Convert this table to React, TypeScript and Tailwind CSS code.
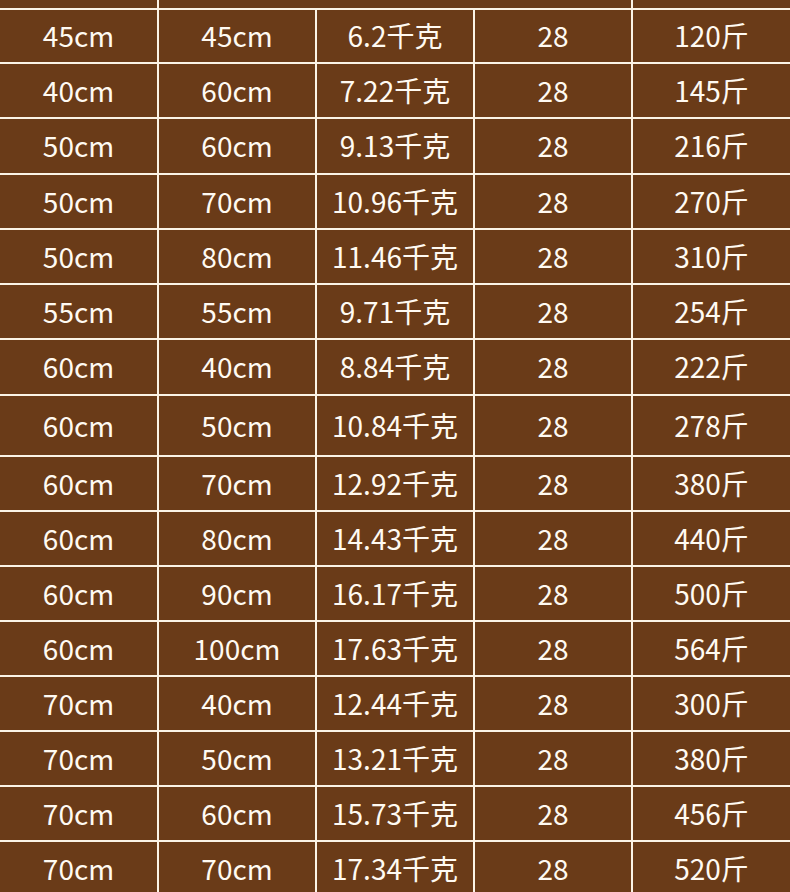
import React from "react";

const rows: { h: string; c: string[] }[] = [
  { h: "h-[52px]", c: ["45cm", "45cm", "6.2千克", "28", "120斤"] },
  { h: "h-[53px]", c: ["40cm", "60cm", "7.22千克", "28", "145斤"] },
  { h: "h-[54px]", c: ["50cm", "60cm", "9.13千克", "28", "216斤"] },
  { h: "h-[53px]", c: ["50cm", "70cm", "10.96千克", "28", "270斤"] },
  { h: "h-[53px]", c: ["50cm", "80cm", "11.46千克", "28", "310斤"] },
  { h: "h-[53px]", c: ["55cm", "55cm", "9.71千克", "28", "254斤"] },
  { h: "h-[54px]", c: ["60cm", "40cm", "8.84千克", "28", "222斤"] },
  { h: "h-[59px]", c: ["60cm", "50cm", "10.84千克", "28", "278斤"] },
  { h: "h-[53px]", c: ["60cm", "70cm", "12.92千克", "28", "380斤"] },
  { h: "h-[53px]", c: ["60cm", "80cm", "14.43千克", "28", "440斤"] },
  { h: "h-[53px]", c: ["60cm", "90cm", "16.17千克", "28", "500斤"] },
  { h: "h-[53px]", c: ["60cm", "100cm", "17.63千克", "28", "564斤"] },
  { h: "h-[53px]", c: ["70cm", "40cm", "12.44千克", "28", "300斤"] },
  { h: "h-[53px]", c: ["70cm", "50cm", "13.21千克", "28", "380斤"] },
  { h: "h-[53px]", c: ["70cm", "60cm", "15.73千克", "28", "456斤"] },
  { h: "h-[53px]", c: ["70cm", "70cm", "17.34千克", "28", "520斤"] },
];

export default function App() {
  return (
    <div
      className="w-[790px] h-[892px] overflow-hidden bg-[#fbf3e6] flex flex-col gap-[2px] text-[#fffaf2] text-[28px] leading-none"
      style={{ fontFamily: '"Noto Sans CJK SC", "Noto Sans", sans-serif' }}
    >
      <div className="grid grid-cols-[157px_1fr_157px] gap-x-[2px] h-[8px] shrink-0">
        <div className="bg-[#6a3b18]" />
        <div className="bg-[#6a3b18]" />
        <div className="bg-[#6a3b18]" />
      </div>
      {rows.map((r, i) => (
        <div
          key={i}
          className={`grid grid-cols-[157px_156px_156px_156px_157px] gap-x-[2px] shrink-0 ${r.h}`}
        >
          {r.c.map((t, j) => (
            <div key={j} className="bg-[#6a3b18] flex items-center justify-center pb-[2px]">
              {t}
            </div>
          ))}
        </div>
      ))}
    </div>
  );
}
